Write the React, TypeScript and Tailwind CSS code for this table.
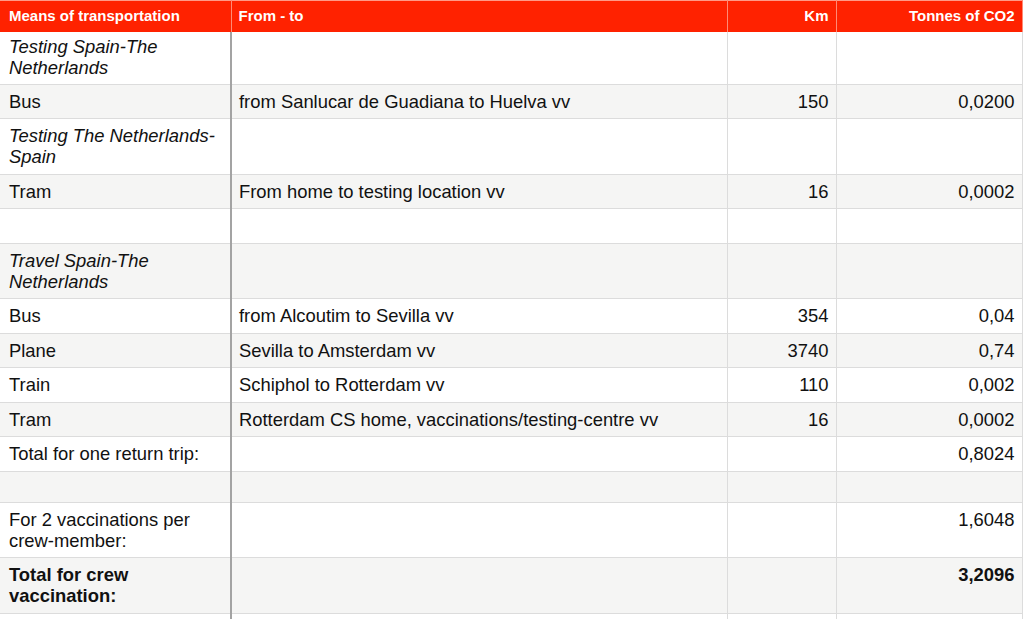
const ROWS: {
  mode: string;
  route?: string;
  km?: string;
  co2?: string;
  italic?: boolean;
  bold?: boolean;
  short?: boolean;
  tight?: boolean;
}[] = [
  { mode: "Testing Spain-The Netherlands", italic: true, tight: true },
  { mode: "Bus", route: "from Sanlucar de Guadiana to Huelva vv", km: "150", co2: "0,0200" },
  { mode: "Testing The Netherlands-Spain", italic: true },
  { mode: "Tram", route: "From home to testing location vv", km: "16", co2: "0,0002" },
  { mode: "" },
  { mode: "Travel Spain-The Netherlands", italic: true },
  { mode: "Bus", route: "from Alcoutim to Sevilla vv", km: "354", co2: "0,04" },
  { mode: "Plane", route: "Sevilla to Amsterdam vv", km: "3740", co2: "0,74" },
  { mode: "Train", route: "Schiphol to Rotterdam vv", km: "110", co2: "0,002" },
  { mode: "Tram", route: "Rotterdam CS home, vaccinations/testing-centre vv", km: "16", co2: "0,0002" },
  { mode: "Total for one return trip:", co2: "0,8024" },
  { mode: "", short: true },
  { mode: "For 2 vaccinations per crew-member:", co2: "1,6048" },
  { mode: "Total for crew vaccination:", co2: "3,2096", bold: true },
  { mode: "" },
];

export default function App() {
  return (
    <div className="w-[1024px] h-[619px] overflow-hidden bg-white font-['Liberation_Sans',Arial,sans-serif] text-[#111]">
      <table className="w-[1022px] table-fixed border-collapse">
        <colgroup>
          <col className="w-[231px]" />
          <col className="w-[496px]" />
          <col className="w-[109px]" />
          <col className="w-[186px]" />
        </colgroup>
        <thead>
          <tr className="bg-[#ff2200] text-white text-[15px] font-bold leading-[18px] h-[31px] border-t border-[#ff9a88] shadow-[0_1px_0_#9c9c9c]">
            <th className="text-left pl-[9px] pr-[7px] border-r border-[#ff8a75]">Means of transportation</th>
            <th className="text-left px-[7px] border-r border-[#ff8a75]">From - to</th>
            <th className="text-right px-[7px] border-r border-[#ff8a75]">Km</th>
            <th className="text-right px-[7px] border-r border-[#ff8a75]">Tonnes of CO2</th>
          </tr>
        </thead>
        <tbody className="text-[18.4px] leading-[21px]">
          {ROWS.map((r, i) => {
            const bg = i % 2 === 1 ? "bg-[#f5f5f4]" : "bg-white";
            const cell = r.short ? "h-[31px] py-0" : r.tight ? "pt-[4.5px] pb-[5.5px]" : "py-[6.25px]";
            const blank = r.short ? "" : "\u00a0";
            return (
              <tr key={i} className={`${bg} border-b border-[#dcdcdc] align-top`}>
                <td
                  className={`${cell} pl-[9px] pr-[12px] border-r-2 border-[#a3a3a3] ${r.italic ? "italic" : ""} ${r.bold ? "font-bold" : ""}`}
                >
                  {r.mode || blank}
                </td>
                <td className={`${cell} px-[7px] border-r border-[#dcdcdc]`}>{r.route}</td>
                <td className={`${cell} px-[7px] text-right border-r border-[#dcdcdc]`}>{r.km}</td>
                <td className={`${cell} px-[7px] text-right border-r border-[#dcdcdc] ${r.bold ? "font-bold" : ""}`}>{r.co2}</td>
              </tr>
            );
          })}
        </tbody>
      </table>
    </div>
  );
}
